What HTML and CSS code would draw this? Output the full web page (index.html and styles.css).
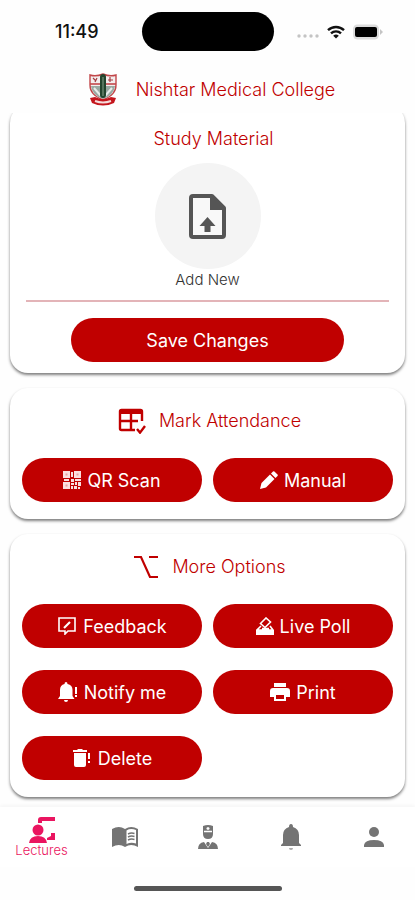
FILE: index.html
```html
<!DOCTYPE html>
<html lang="en">
<head>
  <meta charset="UTF-8" />
  <meta name="viewport" content="width=device-width, initial-scale=1.0"/>
  <title>Nishtar Medical College</title>
  <link rel="stylesheet" href="styles.css">
</head>
<body>

<!-- Phone status bar -->
<div class="status-bar">
  <span class="time">11:49</span>
  <span class="island"></span>
  <div class="status-icons">
    <svg width="22" height="4" viewBox="0 0 22 4" fill="#c4c4c4"><circle cx="2" cy="2" r="1.700"/><circle cx="8" cy="2" r="1.700"/><circle cx="14" cy="2" r="1.700"/><circle cx="20" cy="2" r="1.700"/></svg>
    <svg width="18" height="14" viewBox="0 0 18 14" fill="none" stroke="#111" stroke-width="2.4"><path d="M1 5.2a11.5 11.5 0 0 1 16 0"/><path d="M4 8.4a7.2 7.2 0 0 1 10 0"/><path d="M9 13.6 6.2 10.7a4.2 4.2 0 0 1 5.6 0z" fill="#111" stroke="none"/></svg>
    <svg width="30" height="16" viewBox="0 0 30 16"><rect x="0" y="0.5" width="26" height="15" rx="4.5" fill="#dcdcdc"/><path d="M27 5l3 3-3 3z" fill="#c4c4c4"/><rect x="2" y="3" width="22" height="10" rx="2" fill="#000"/></svg>
  </div>
</div>

<header>
  <svg class="crest" width="30" height="34" viewBox="0 0 30 34">
    <path d="M2 2q6 2 13-1 7 3 13 1v10c0 7-4 11-13 15C6 23 2 19 2 12z" fill="#f4eeee" stroke="#c2474a" stroke-width="1.4"/>
    <path d="M3 13h24q-1 9-12 13Q4 22 3 13z" fill="#9aa9a2"/>
    <path d="M2 11h26" stroke="#c2474a" stroke-width="1.6"/>
    <path d="M6 15l7 8M24 15l-7 8" stroke="#e8ecea" stroke-width="2"/>
    <path d="M5 5l3 3M9 5 7 9M20 7h5M22 4v5" stroke="#a33c40" stroke-width="1.2"/>
    <rect x="12" y="1" width="6" height="24" rx="3" fill="#24452e"/>
    <path d="M15 4v19" stroke="#8aa58d" stroke-width="1"/>
    <path d="M2 25l5-1q8 4 16 0l5 1-2 5q-11 5-22 0z" fill="#c4151c"/>
    <path d="M7 28q8 3 16 0" stroke="#f6dcdc" stroke-width="2" fill="none"/>
  </svg>
  <h1>Nishtar Medical College</h1>
</header>

<main>
  <section class="card study">
    <h2>Study Material</h2>
    <button class="upload" id="add-new" aria-label="Add New">
      <svg width="48" height="50" viewBox="0 0 48 50"><path d="M9 5h19l12 12v27q0 2-2 2H9q-2 0-2-2V7q0-2 2-2z" fill="#f8f8f8" stroke="#555" stroke-width="4" stroke-linejoin="round"/><path d="M26 4h3l12 12v3H26z" fill="#555"/><path d="M23.500 26l8 9h-5v6h-6v-6h-5z" fill="#555"/></svg>
    </button>
    <label for="add-new">Add New</label>
    <hr>
    <button class="btn save">Save Changes</button>
  </section>

  <section class="card attendance">
    <div class="card-title">
      <svg width="28" height="26" viewBox="0 0 28 26" fill="none" stroke="#c00000" stroke-width="2.4"><path d="M24 13V3.500Q24 2 22.500 2h-19Q2 2 2 3.500v17Q2 22 3.500 22H17M2 13h18M13 5v17"/><path d="M2 4h22" stroke-width="4"/><path d="M19 21l3 3.600L27 18"/></svg>
      <h2>Mark Attendance</h2>
    </div>
    <div class="buttons">
      <button class="btn">
        <svg width="18" height="18" viewBox="0 0 18 18" fill="#fbdede"><path d="M0 0h7v7H0zM11 0h7v7h-7zM0 11h7v7H0zM8 1h2v5H8zM8 8h3v3H8zM1 8h5v2H1zM12 8h6v2h-6zM8 12h3v2H8zM8 15h2v3H8zM12 11h2v3h-2zM15 11h3v4h-3zM11 15h3v3h-3zM15 16h2v2h-2z"/><path d="M2.500 2.500h2v2h-2zM13.500 2.500h2v2h-2zM2.500 13.500h2v2h-2z" fill="#e9a0a0"/></svg>
        QR Scan
      </button>
      <button class="btn">
        <svg width="18" height="18" viewBox="0 0 18 18" fill="#fff"><path d="M0 18l1.500-6L10 3.500l4.500 4.500L6 16.500z"/><path d="M11 2.500 13 .500q.700-.700 1.400 0L17.500 3.600q.700.700 0 1.400l-2 2z"/></svg>
        Manual
      </button>
    </div>
  </section>

  <section class="card options">
    <div class="card-title">
      <svg width="26" height="24" viewBox="0 0 26 24" fill="none" stroke="#c00000" stroke-width="2.200"><path d="M1 2h7l9 20h8M16 2h9"/></svg>
      <h2>More Options</h2>
    </div>
    <div class="buttons">
      <button class="btn">
        <svg width="20" height="18" viewBox="0 0 20 18" fill="none" stroke="#fff" stroke-width="1.600"><path d="M2 1h16v13h-7l-3 3v-3H2z"/><path d="M7 11l6-6" stroke-width="2.200"/></svg>
        Feedback
      </button>
      <button class="btn">
        <svg width="18" height="18" viewBox="0 0 18 18" fill="none" stroke="#fff" stroke-width="1.600"><path d="M4.500 6.500 10 1l4.500 4L9 10.500z"/><path d="M5 9l-4 4h16l-3-4M6 11.500h7"/><path d="M0 13h18v5H0z" fill="#fff" stroke="none"/></svg>
        Live Poll
      </button>
      <button class="btn">
        <svg width="20" height="20" viewBox="0 0 20 20" fill="#fff"><path d="M8 0q1.500 0 1.500 2 5 1 5 6v6l2 3H0l2-3V8q0-5 4.500-6Q6.500 0 8 0zM6 18h4q0 2-2 2t-2-2zM17 5h2v7h-2zM17 13h2v2h-2z"/></svg>
        Notify me
      </button>
      <button class="btn">
        <svg width="20" height="18" viewBox="0 0 20 18" fill="#fff"><path d="M4 0h12v4H4zM3 5h14q3 0 3 3v6h-4v-4H4v4H0V8q0-3 3-3z"/><path d="M5 11h10v6H5z" fill="none" stroke="#fff" stroke-width="2"/></svg>
        Print
      </button>
      <button class="btn">
        <svg width="20" height="18" viewBox="0 0 20 18" fill="#fff"><path d="M1 1h4l1-1h4l1 1h4v2H1zM2 4h12v12q0 2-2 2H4q-2 0-2-2zM16 4h2v6h-2zM16 12h2v2h-2z"/></svg>
        Delete
      </button>
    </div>
  </section>
</main>

<nav>
  <a href="#" class="active">
    <svg width="28" height="26" viewBox="0 0 28 26" fill="#ea1560"><circle cx="10" cy="13" r="5.500"/><path d="M1 26q1-7 9-7t9 7zM10 6V3q0-3 3-3h14v4H14v2zM27 16v7h-8v-2l4-2v-3z"/></svg>
    Lectures
  </a>
  <a href="#" aria-label="Library">
    <svg width="26" height="20" viewBox="0 0 26 20" fill="#747474"><path d="M0 2q7-4 13 0 6-4 13 0v18q-7-4-13 0-6-4-13 0z"/><path d="M14.500 3.500q4-2.500 9.500-.500v13.500q-5-1.500-9.500.500z" fill="#fff"/><path d="M16 7q3-1.500 6.500-.500M16 10q3-1.500 6.500-.500M16 13q3-1.500 6.500-.500" stroke="#747474" stroke-width="1.500" fill="none"/></svg>
  </a>
  <a href="#" aria-label="Doctors">
    <svg width="20" height="24" viewBox="0 0 20 24" fill="#747474"><path d="M5 1q5-2 10 0v8q0 5-5 5t-5-5z"/><path d="M6 6.500h8M10 2v3M8.500 3.500h3" stroke="#fff" stroke-width="1.300"/><path d="M0 24q0-6 6-7l4 6 4-6q6 1 6 7zM9 17h2l1 2-2 3-2-3z"/></svg>
  </a>
  <a href="#" aria-label="Notifications">
    <svg width="22" height="26" viewBox="0 0 22 26" fill="#747474"><path d="M11 0q2 0 2 3 6 2 6 8v8l2 2v1H1v-1l2-2v-8q0-6 6-8 0-3 2-3z"/><path d="M9 24h4q0 2-2 2t-2-2z" fill="#aaa"/></svg>
  </a>
  <a href="#" aria-label="Profile">
    <svg width="20" height="20" viewBox="0 0 20 20" fill="#747474"><circle cx="10" cy="5" r="5"/><path d="M0 20v-2q1-5 10-5t10 5v2z"/></svg>
  </a>
</nav>

<div class="home-bar"></div>

</body>
</html>
```

FILE: styles.css
```css
* {
  box-sizing: border-box;
}

body {
  margin: 0;
  min-height: 100vh;
  display: flex;
  flex-direction: column;
  background: #fefefe;
  font-family: Inter, 'Liberation Sans', sans-serif;
  color: #c00000;
}

svg {
  flex-shrink: 0;
}

h1, h2 {
  margin: 0;
  font-size: 18px;
  line-height: 24px;
  font-weight: 300;
}

button {
  border: none;
  font-family: inherit;
  cursor: pointer;
}

/* status bar */
.status-bar {
  display: grid;
  grid-template-columns: 1fr 132px 1fr;
  align-items: center;
  padding-top: 12px;
}

.time {
  padding-left: 12px;
  text-align: center;
  font-size: 18px;
  font-weight: 500;
  color: #111;
}

.island {
  height: 39px;
  border-radius: 20px;
  background: #000;
}

.status-icons {
  display: flex;
  align-items: center;
  justify-content: center;
  gap: 8px;
  padding-right: 8px;
}

.status-icons svg:first-child {
  margin-top: 8px;
}

header {
  display: flex;
  align-items: center;
  justify-content: center;
  gap: 18px;
  padding: 22px 0 6px 8px;
}

/* cards */
main {
  flex: 1;
  overflow: hidden;
  padding: 0 10px 10px;
  display: flex;
  flex-direction: column;
  gap: 15px;
}

.card {
  background: #fff;
  border-radius: 18px;
  box-shadow: 0 2px 3px rgba(0, 0, 0, 0.5);
}

.study {
  margin-top: -8px;
  padding: 22px 16px 11px;
  display: flex;
  flex-direction: column;
  align-items: center;
}

.study h2 {
  padding-left: 12px;
}

.upload {
  width: 106px;
  height: 106px;
  margin-top: 12px;
  padding: 0;
  border-radius: 50%;
  background: #f4f4f4;
  display: flex;
  align-items: center;
  justify-content: center;
}

.study label {
  margin-top: 1px;
  font-size: 15px;
  line-height: 20px;
  font-weight: 300;
  color: #333;
}

hr {
  width: 100%;
  height: 2px;
  margin: 10px 0 16px;
  border: none;
  background: #e3b4b8;
}

.btn {
  height: 44px;
  padding: 0;
  border-radius: 22px;
  background: #c00000;
  color: #fff;
  font-size: 18px;
  display: flex;
  align-items: center;
  justify-content: center;
  gap: 6px;
}

.save {
  width: 75%;
}

.card-title {
  display: flex;
  align-items: center;
  justify-content: center;
  gap: 13px;
  height: 26px;
  padding-left: 4px;
}

.attendance,
.options {
  padding: 20px 12px 17px;
}

.buttons {
  display: grid;
  grid-template-columns: 1fr 1fr;
  gap: 22px 11px;
  margin-top: 24px;
}

/* bottom navigation */
nav {
  display: grid;
  grid-template-columns: repeat(5, 1fr);
  height: 60px;
  background: #fff;
  box-shadow: 0 -2px 3px rgba(0, 0, 0, 0.03);
}

nav a {
  display: flex;
  flex-direction: column;
  align-items: center;
  justify-content: center;
  font-size: 13px;
  line-height: 14px;
  font-weight: 300;
  color: #ea1560;
  text-decoration: none;
}

.home-bar {
  width: 148px;
  height: 5px;
  margin: 19px auto 9px;
  border-radius: 3px;
  background: #555;
}
```
